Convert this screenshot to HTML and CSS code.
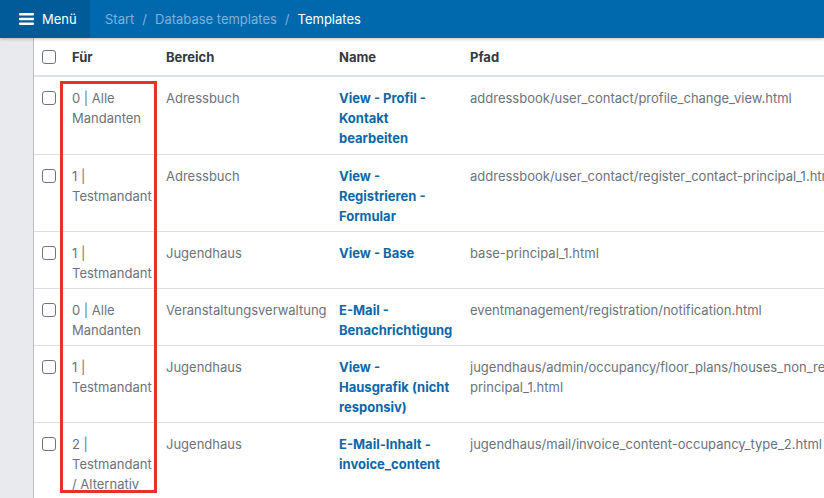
FILE: index.html
```html
<!DOCTYPE html>
<html lang="de">
<head>
    <meta charset="UTF-8">
    <meta name="viewport" content="width=device-width, initial-scale=1.0">
    <title>Templates</title>
    <link rel="stylesheet" href="styles.css">
</head>
<body>
    <header class="topbar">
        <button class="menu-btn">
            <svg width="15" height="12" viewBox="0 0 15 12"><rect y="0" width="15" height="2.4" rx="1" fill="#fff"/><rect y="4.8" width="15" height="2.4" rx="1" fill="#fff"/><rect y="9.6" width="15" height="2.4" rx="1" fill="#fff"/></svg>
            Menü
        </button>
        <nav class="breadcrumb">
            <a href="#">Start</a>
            <span class="sep">/</span>
            <a href="#">Database templates</a>
            <span class="sep">/</span>
            <span class="current">Templates</span>
        </nav>
    </header>

    <div class="layout">
        <aside class="sidebar"></aside>
        <main class="content">
            <table class="templates">
                <colgroup>
                    <col class="col-check">
                    <col class="col-for">
                    <col class="col-area">
                    <col class="col-name">
                    <col class="col-path">
                </colgroup>
                <thead>
                    <tr>
                        <th><input type="checkbox"></th>
                        <th>Für</th>
                        <th>Bereich</th>
                        <th>Name</th>
                        <th>Pfad</th>
                    </tr>
                </thead>
                <tbody>
                    <tr>
                        <td><input type="checkbox"></td>
                        <td>0 | Alle Mandanten</td>
                        <td>Adressbuch</td>
                        <td><a href="#">View - Profil - Kontakt bearbeiten</a></td>
                        <td>addressbook/user_contact/profile_change_view.html</td>
                    </tr>
                    <tr>
                        <td><input type="checkbox"></td>
                        <td>1 | Testmandant</td>
                        <td>Adressbuch</td>
                        <td><a href="#">View - Registrieren - Formular</a></td>
                        <td>addressbook/user_contact/register_contact-principal_1.html</td>
                    </tr>
                    <tr>
                        <td><input type="checkbox"></td>
                        <td>1 | Testmandant</td>
                        <td>Jugendhaus</td>
                        <td><a href="#">View - Base</a></td>
                        <td>base-principal_1.html</td>
                    </tr>
                    <tr>
                        <td><input type="checkbox"></td>
                        <td>0 | Alle Mandanten</td>
                        <td>Veranstaltungsverwaltung</td>
                        <td><a href="#">E-Mail - Benachrichtigung</a></td>
                        <td>eventmanagement/registration/notification.html</td>
                    </tr>
                    <tr>
                        <td><input type="checkbox"></td>
                        <td>1 | Testmandant</td>
                        <td>Jugendhaus</td>
                        <td><a href="#">View - Hausgrafik (nicht responsiv)</a></td>
                        <td>jugendhaus/admin/occupancy/floor_plans/houses_non_responsive-principal_1.html</td>
                    </tr>
                    <tr>
                        <td><input type="checkbox"></td>
                        <td>2 | Testmandant / Alternativ</td>
                        <td>Jugendhaus</td>
                        <td><a href="#">E-Mail-Inhalt - invoice_content</a></td>
                        <td>jugendhaus/mail/invoice_content-occupancy_type_2.html</td>
                    </tr>
                </tbody>
            </table>
            <div class="highlight"></div>
        </main>
    </div>
</body>
</html>
```

FILE: styles.css
```css
:root {
    --bar-color: #0069ad;
    --bar-dark: #005b98;
    --text-color: #6c737d;
    --head-color: #343a40;
    --link-color: #0c67a9;
    --line-color: #dcdfe3;
}

html, body {
    height: 100%;
}

body {
    font-family: Inter, 'Noto Sans', Arial, sans-serif;
    font-size: 13px;
    margin: 0;
    color: var(--text-color);
    overflow: hidden;
    display: flex;
    flex-direction: column;
}

.topbar {
    height: 38px;
    flex: 0 0 38px;
    display: flex;
    align-items: stretch;
    background: var(--bar-color);
    position: relative;
    z-index: 2;
    box-shadow: 0 1px 3px rgba(0, 0, 0, 0.25);
}

.menu-btn {
    width: 90px;
    background: var(--bar-dark);
    border: none;
    color: #fff;
    font-family: inherit;
    font-size: 13px;
    display: flex;
    align-items: center;
    gap: 8px;
    padding: 0 0 0 19px;
    cursor: pointer;
}

.breadcrumb {
    display: flex;
    align-items: center;
    padding-left: 15px;
    font-size: 13px;
}

.breadcrumb a {
    color: #7fb1da;
    text-decoration: none;
}

.breadcrumb .sep {
    color: #7fb1da;
    margin: 0 8px;
}

.breadcrumb .current {
    color: #fff;
}

.layout {
    flex: 1;
    display: flex;
    min-height: 0;
}

.sidebar {
    width: 33px;
    flex: 0 0 33px;
    background: #e9eaee;
    border-right: 1px solid #b9bcc1;
}

.content {
    flex: 1;
    position: relative;
    overflow: hidden;
    background: #fff;
}

.templates {
    border-collapse: collapse;
    table-layout: fixed;
    width: 848px;
}

.col-check { width: 30px; }
.col-for { width: 94px; }
.col-area { width: 173px; }
.col-name { width: 131px; }
.col-path { width: 420px; }

.templates th,
.templates td {
    text-align: left;
    vertical-align: top;
    line-height: 20px;
    padding: 11px 8px 5px;
    border-bottom: 1px solid var(--line-color);
}

.templates th {
    color: var(--head-color);
    font-weight: 700;
    padding: 9px 8px 8px;
    border-bottom: 2px solid var(--line-color);
}

.templates tbody tr:first-child td {
    padding-bottom: 6px;
}

.templates td:first-child,
.templates th:first-child {
    padding-right: 0;
}

.templates td:nth-child(4) {
    padding-right: 12px;
}

.templates input[type="checkbox"] {
    appearance: none;
    width: 14px;
    height: 14px;
    margin: 3px 0 0;
    border: 1px solid #6f747a;
    border-radius: 3px;
    background: #fff;
    display: block;
}

.templates a {
    color: var(--link-color);
    font-weight: 700;
    text-decoration: none;
}

.highlight {
    position: absolute;
    left: 26px;
    top: 43px;
    width: 91px;
    height: 406px;
    border: 3px solid #e8312b;
}
```
